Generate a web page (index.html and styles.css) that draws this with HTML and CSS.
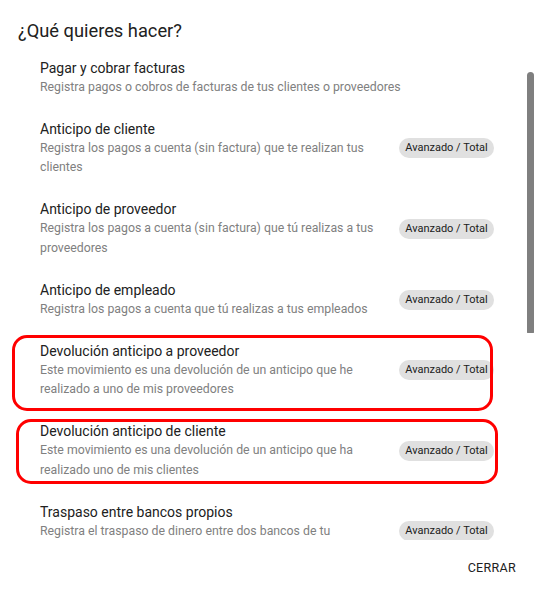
FILE: index.html
```html
<!DOCTYPE html>
<html lang="es">
<head>
<meta charset="utf-8">
<title>¿Qué quieres hacer?</title>
<link rel="stylesheet" href="styles.css">
</head>
<body>
<div class="dialog">
  <h2 class="dialog-title">¿Qué quieres hacer?</h2>
  <div class="list">
    <div class="item">
      <div class="text">
        <div class="item-title">Pagar y cobrar facturas</div>
        <div class="item-desc">Registra pagos o cobros de facturas de tus clientes o proveedores</div>
      </div>
    </div>
    <div class="item">
      <div class="text">
        <div class="item-title">Anticipo de cliente</div>
        <div class="item-desc">Registra los pagos a cuenta (sin factura) que te realizan tus clientes</div>
      </div>
      <span class="chip">Avanzado / Total</span>
    </div>
    <div class="item">
      <div class="text">
        <div class="item-title">Anticipo de proveedor</div>
        <div class="item-desc">Registra los pagos a cuenta (sin factura) que tú realizas a tus proveedores</div>
      </div>
      <span class="chip">Avanzado / Total</span>
    </div>
    <div class="item">
      <div class="text">
        <div class="item-title">Anticipo de empleado</div>
        <div class="item-desc">Registra los pagos a cuenta que tú realizas a tus empleados</div>
      </div>
      <span class="chip">Avanzado / Total</span>
    </div>
    <div class="item">
      <div class="text">
        <div class="item-title">Devolución anticipo a proveedor</div>
        <div class="item-desc">Este movimiento es una devolución de un anticipo que he realizado a uno de mis proveedores</div>
      </div>
      <span class="chip">Avanzado / Total</span>
      <span class="mark mark-a"></span>
    </div>
    <div class="item">
      <div class="text">
        <div class="item-title">Devolución anticipo de cliente</div>
        <div class="item-desc">Este movimiento es una devolución de un anticipo que ha realizado uno de mis clientes</div>
      </div>
      <span class="chip">Avanzado / Total</span>
      <span class="mark mark-b"></span>
    </div>
    <div class="item">
      <div class="text text-two-line">
        <div class="item-title">Traspaso entre bancos propios</div>
        <div class="item-desc">Registra el traspaso de dinero entre dos bancos de tu</div>
      </div>
      <span class="chip">Avanzado / Total</span>
    </div>
  </div>
  <div class="scroll-thumb"></div>
  <div class="actions">
    <button class="btn" type="button">Cerrar</button>
  </div>
</div>
</body>
</html>
```
FILE: styles.css
```css
html, body {
  margin: 0;
  padding: 0;
  background: #ffffff;
}
body {
  font-family: Roboto, "Liberation Sans", Arial, sans-serif;
  color: rgba(0, 0, 0, 0.87);
}
.dialog {
  position: relative;
  width: 534px;
  height: 591px;
  overflow: hidden;
}
.dialog-title {
  margin: 0;
  padding: 20px 0 0 18px;
  height: 27px;
  font-size: 18.3px;
  line-height: 22px;
  font-weight: 400;
  color: #212121;
}
.list {
  height: 493px;
  overflow: hidden;
  padding: 0 40px;
}
.item {
  position: relative;
  display: flex;
  align-items: center;
  gap: 16px;
  padding: 10.75px 0;
}
.text {
  flex: 1 1 auto;
  min-width: 0;
}
.text-two-line {
  min-height: 59px;
}
.item-title {
  font-size: 14px;
  line-height: 20px;
  color: #212121;
}
.item-desc {
  font-size: 12.3px;
  line-height: 19.5px;
  color: #808080;
}
.chip {
  flex: none;
  width: 95px;
  height: 20px;
  border-radius: 10px;
  background: #e0e0e0;
  color: #212121;
  font-size: 11px;
  line-height: 20px;
  text-align: center;
  white-space: nowrap;
}
.mark {
  position: absolute;
  border: 3.5px solid #ff0000;
  border-radius: 15px;
  pointer-events: none;
}
.mark-a {
  left: -28px;
  right: 1px;
  top: 5px;
  bottom: 0px;
}
.mark-b {
  left: -24px;
  right: -4px;
  top: 8px;
  bottom: 7px;
}
.scroll-thumb {
  position: absolute;
  right: 0;
  top: 72px;
  width: 7px;
  height: 261px;
  background: #7f7f7f;
  border-radius: 4px 4px 1px 1px;
}
.actions {
  display: flex;
  justify-content: flex-end;
  padding: 18px 14px 0 0;
}
.btn {
  border: 0;
  background: transparent;
  font-family: inherit;
  font-size: 12.5px;
  line-height: 20px;
  text-transform: uppercase;
  letter-spacing: 0.3px;
  color: #212121;
  padding: 0 4px;
}
```
